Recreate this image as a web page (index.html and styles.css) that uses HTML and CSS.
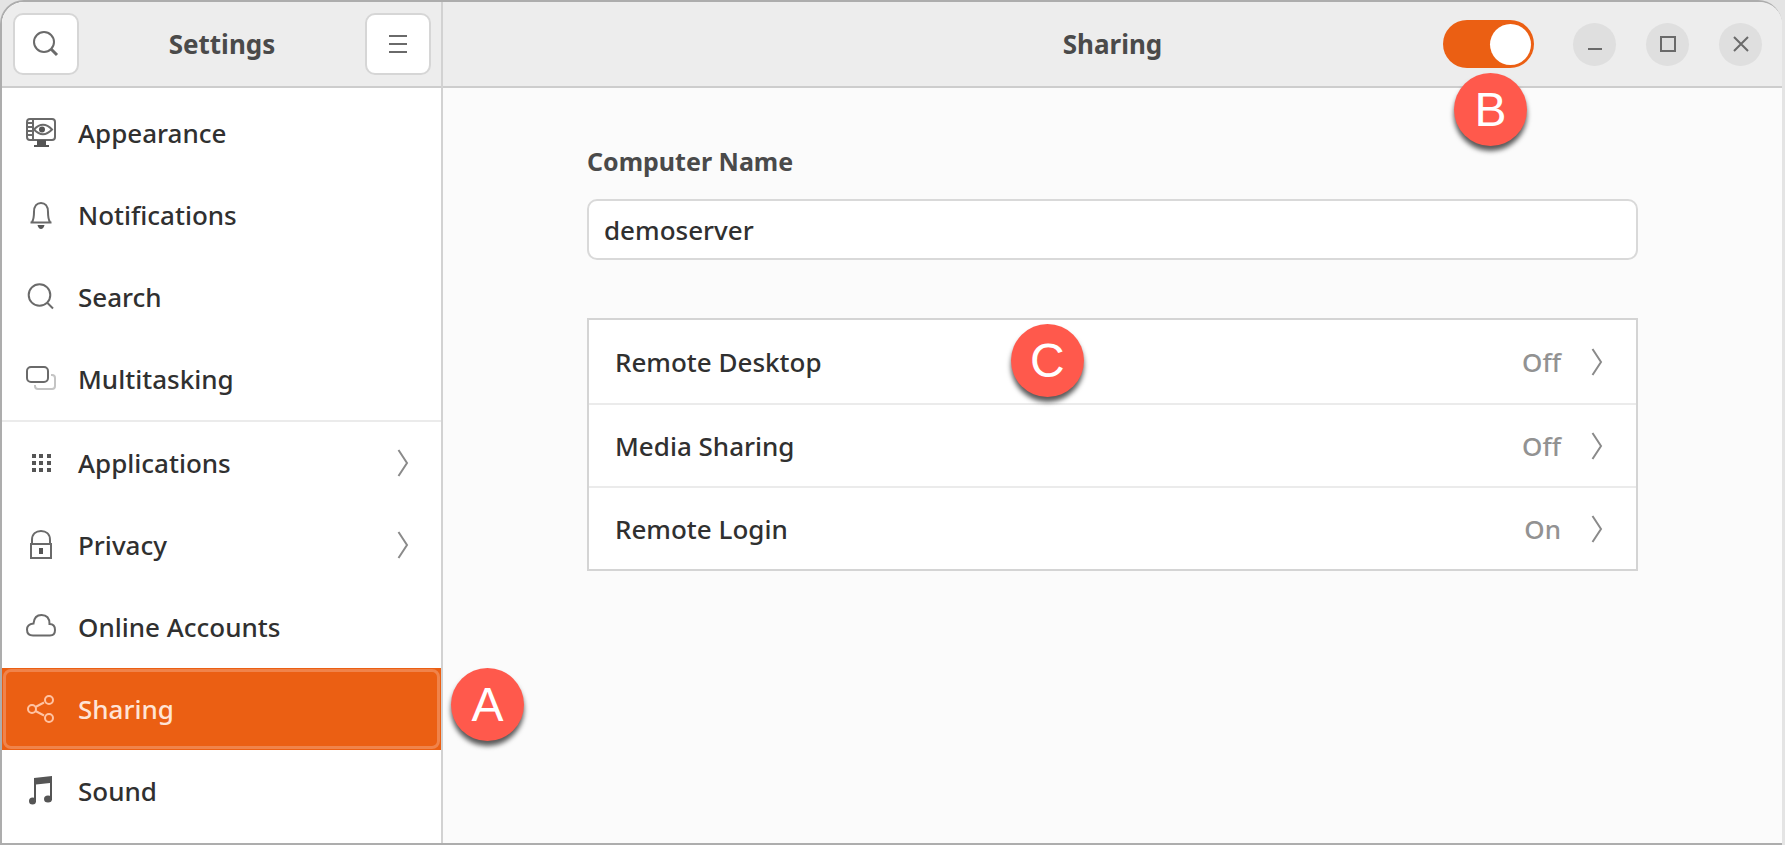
FILE: index.html
```html
<!DOCTYPE html>
<html lang="en">
<head>
    <meta charset="UTF-8">
    <meta name="viewport" content="width=device-width, initial-scale=1.0">
    <title>Settings</title>
    <link rel="stylesheet" href="styles.css">
</head>
<body>
    <div class="window">
        <aside class="sidebar">
            <header class="header sidebar-header">
                <button class="tool-button" aria-label="Search">
                    <svg width="26" height="26" viewBox="0 0 26 26"><circle cx="11" cy="11" r="10"/><path d="M18 18L24 24" stroke-width="3"/></svg>
                </button>
                <h1>Settings</h1>
                <button class="tool-button" aria-label="Menu">
                    <svg width="18" height="18" viewBox="0 0 18 18"><path d="M0 1h18M0 9h18M0 17h18"/></svg>
                </button>
            </header>
            <nav>
                <ul class="menu">
                    <li><a href="#">
                        <svg class="icon" viewBox="0 0 30 30"><rect x="1" y="1" width="28" height="21" rx="3"/><path d="M7 1v21M1 5h6M1 9h6M1 13h6M1 17h6" /><path d="M8 11.500Q17 2 26 11.500Q17 21 8 11.500z"/><circle class="solid" cx="16" cy="11.500" r="3"/><path class="solid" d="M11 22h9v5h3v2H8v-2h3z"/></svg>
                        <span>Appearance</span></a></li>
                    <li><a href="#">
                        <svg class="icon" viewBox="0 0 30 30"><path d="M4.500 22.500h21M6 22C8 19 8 17 8 12C8 6 11 3 15 3s7 3 7 9c0 5 0 7 2 10"/><path class="solid" d="M11.500 25h7q-1 4-3.500 4t-3.500-4z"/></svg>
                        <span>Notifications</span></a></li>
                    <li><a href="#">
                        <svg class="icon" viewBox="0 0 30 30"><circle cx="13.500" cy="13" r="10.800"/><path d="M21 20.500L27 26.500"/></svg>
                        <span>Search</span></a></li>
                    <li><a href="#">
                        <svg class="icon" viewBox="0 0 30 30"><rect x="1" y="3" width="21" height="15" rx="4"/><path class="faint" d="M25 11h1q3 0 3 3v8q0 3-3 3H12q-3 0-3-3v-1"/></svg>
                        <span>Multitasking</span></a></li>
                    <li class="separated"><a href="#">
                        <svg class="icon" viewBox="0 0 30 30"><path class="solid" d="M6 6h4v4H6zM13 6h4v4h-4zM21 6h4v4h-4zM6 13h4v4H6zM13 13h4v4h-4zM21 13h4v4h-4zM6 20h4v4H6zM13 20h4v4h-4zM21 20h4v4h-4z"/></svg>
                        <span>Applications</span>
                        <svg class="chevron" viewBox="0 0 12 28"><path d="M1.500 1L10 14L1.500 27"/></svg></a></li>
                    <li><a href="#">
                        <svg class="icon" viewBox="0 0 30 30"><path d="M5 14h20v14H5zM6 14v-4c0-6 4-9 9-9s9 3 9 9v4"/><path class="solid" d="M13 18h4v6h-4z"/></svg>
                        <span>Privacy</span>
                        <svg class="chevron" viewBox="0 0 12 28"><path d="M1.500 1L10 14L1.500 27"/></svg></a></li>
                    <li><a href="#">
                        <svg class="icon" viewBox="0 0 30 30"><path d="M7 23.500C3 23.500 1 21 1 17.500S3.500 12 7.500 11.500C8 6 11 3 15.500 3c5 0 8 3 8 9 3 0 5.500 2 5.500 6s-2 5.500-5 5.500z"/></svg>
                        <span>Online Accounts</span></a></li>
                    <li class="selected"><a href="#" aria-current="page">
                        <svg class="icon" viewBox="0 0 30 30"><circle cx="6" cy="15" r="4"/><circle cx="23" cy="6" r="4"/><circle cx="23" cy="24" r="4"/><path d="M9.500 13L18 8.500M9.500 17L18 21.500"/></svg>
                        <span>Sharing</span></a>
                        <span class="badge badge-a">A</span></li>
                    <li><a href="#">
                        <svg class="icon" viewBox="0 0 30 30"><path class="solid" d="M8 2L26 0v24h-2V7L10 8.500V26H8z"/><ellipse class="solid" cx="6.500" cy="25" rx="3.500" ry="3.500"/><ellipse class="solid" cx="22" cy="23" rx="4" ry="3.500"/></svg>
                        <span>Sound</span></a></li>
                </ul>
            </nav>
        </aside>
        <main class="main">
            <header class="header main-header">
                <h2>Sharing</h2>
                <div class="controls">
                    <label class="switch">
                        <input type="checkbox" aria-label="Sharing" checked>
                        <span class="badge badge-b">B</span>
                    </label>
                    <button class="window-button" aria-label="Minimize">
                        <svg width="16" height="16" viewBox="0 0 16 16"><path d="M1 13h14"/></svg>
                    </button>
                    <button class="window-button" aria-label="Maximize">
                        <svg width="16" height="16" viewBox="0 0 16 16"><path d="M1 1h14v14H1z"/></svg>
                    </button>
                    <button class="window-button" aria-label="Close">
                        <svg width="16" height="16" viewBox="0 0 16 16"><path d="M1 1l14 14M15 1L1 15"/></svg>
                    </button>
                </div>
            </header>
            <div class="content">
                <label class="name-label" for="name">Computer Name</label>
                <input class="name-input" type="text" id="name" value="demoserver">
                <div class="list">
                    <button class="row">
                        <span>Remote Desktop</span>
                        <span class="state">Off</span>
                        <svg class="chevron" viewBox="0 0 12 28"><path d="M1.500 1L10 14L1.500 27"/></svg>
                        <span class="badge badge-c">C</span>
                    </button>
                    <button class="row">
                        <span>Media Sharing</span>
                        <span class="state">Off</span>
                        <svg class="chevron" viewBox="0 0 12 28"><path d="M1.500 1L10 14L1.500 27"/></svg>
                    </button>
                    <button class="row">
                        <span>Remote Login</span>
                        <span class="state">On</span>
                        <svg class="chevron" viewBox="0 0 12 28"><path d="M1.500 1L10 14L1.500 27"/></svg>
                    </button>
                </div>
            </div>
        </main>
    </div>
</body>
</html>
```
FILE: styles.css
```css
* {
    box-sizing: border-box;
}

body {
    margin: 0;
    background-color: #e4e4e4;
    font-family: "Noto Sans", sans-serif;
    font-size: 26px;
    font-weight: 500;
    color: #303030;
}

button,
input {
    font: inherit;
    color: inherit;
}

svg {
    fill: none;
    stroke: #6a6a6a;
    stroke-width: 2;
    flex-shrink: 0;
}

.window {
    display: flex;
    min-height: 100vh;
    margin-right: 3px;
    border: 2px solid #adadad;
    border-right: none;
    border-radius: 24px 24px 0 0;
    background-color: #fbfbfb;
}

.sidebar {
    width: 441px;
    flex-shrink: 0;
    border-right: 2px solid #d2d2d2;
    background-color: white;
    border-radius: 22px 0 0 0;
}

.header {
    height: 86px;
    background-color: #ededed;
    border-bottom: 2px solid #cdcdcd;
    align-items: center;
}

.sidebar-header {
    display: flex;
    justify-content: space-between;
    padding: 0 10px 0 11px;
    border-radius: 22px 0 0 0;
}

h1,
h2 {
    margin: 0;
    font-size: 26px;
    font-weight: bold;
    line-height: 36px;
    color: #4a4a4a;
}

.tool-button {
    display: flex;
    align-items: center;
    justify-content: center;
    width: 66px;
    height: 62px;
    padding: 0;
    background-color: white;
    border: 2px solid #d6d6d6;
    border-radius: 10px;
}

.menu {
    list-style: none;
    margin: 0;
    padding: 4px 0 0;
}

.menu li {
    position: relative;
}

.menu a {
    display: flex;
    align-items: center;
    gap: 22px;
    height: 82px;
    padding: 0 32px 0 24px;
    color: inherit;
    text-decoration: none;
}

.menu .separated {
    border-top: 2px solid #ebebeb;
}

.menu .selected a {
    background-color: #eb5f13;
    color: #ffe4d6;
}

.menu .selected a::after {
    content: "";
    position: absolute;
    inset: 1px;
    border: 3px solid #f0834a;
    border-radius: 8px;
}

.selected svg {
    stroke: #ffc3a3;
}

.icon {
    width: 30px;
    height: 30px;
}

.solid {
    fill: #555;
    stroke: none;
}

.faint {
    stroke: #c4c4c4;
}

.chevron {
    width: 12px;
    height: 28px;
    margin-left: auto;
    stroke: #8a8a8a;
}

.main {
    flex: 1;
    min-width: 0;
}

.main-header {
    display: grid;
    grid-template-columns: 1fr auto 1fr;
    padding: 0 20px;
    border-radius: 0 22px 0 0;
}

.main-header h2 {
    grid-column: 2;
}

.controls {
    display: flex;
    align-items: center;
    justify-content: flex-end;
    gap: 30px;
}

.switch {
    position: relative;
    margin-right: 9px;
}

.switch input {
    display: flex;
    align-items: center;
    justify-content: flex-end;
    appearance: none;
    width: 91px;
    height: 48px;
    margin: 0;
    padding: 0 3px;
    background-color: #eb5f13;
    border-radius: 24px;
}

.switch input::before {
    content: "";
    width: 41px;
    height: 41px;
    border-radius: 50%;
    background-color: white;
}

.switch input:not(:checked) {
    justify-content: flex-start;
    background-color: #c4c4c4;
}

.window-button {
    display: flex;
    align-items: center;
    justify-content: center;
    width: 43px;
    height: 43px;
    padding: 0;
    border: none;
    border-radius: 50%;
    background-color: #dfdfdf;
}

.content {
    padding: 55px 144px;
}

.name-label {
    display: block;
    line-height: 36px;
    font-size: 25px;
    font-weight: bold;
    color: #4a4a4a;
}

.name-input {
    display: block;
    width: 100%;
    height: 61px;
    margin: 20px 0 58px;
    padding: 0 15px;
    background-color: white;
    border: 2px solid #d9d9d9;
    border-radius: 10px;
}

.list {
    background-color: white;
    border: 2px solid #d4d4d4;
}

.row {
    position: relative;
    display: flex;
    align-items: center;
    width: 100%;
    height: 83px;
    padding: 0 33px 0 26px;
    background: none;
    border: none;
    text-align: left;
}

.row + .row {
    border-top: 2px solid #ebebeb;
}

.row .chevron {
    margin-left: 30px;
}

.state {
    margin-left: auto;
    color: #929292;
}

.badge {
    position: absolute;
    z-index: 1;
    width: 73px;
    height: 73px;
    border-radius: 50%;
    background-color: #ff594c;
    box-shadow: 0 5px 5px rgba(0, 0, 0, 0.65);
    color: white;
    font-family: "Liberation Sans", sans-serif;
    font-size: 48px;
    font-weight: normal;
    line-height: 73px;
    text-align: center;
}

.badge-a {
    top: 0;
    left: 449px;
}

.badge-b {
    top: 53px;
    left: 11px;
}

.badge-c {
    top: 4px;
    left: calc(40% + 3px);
}
```
